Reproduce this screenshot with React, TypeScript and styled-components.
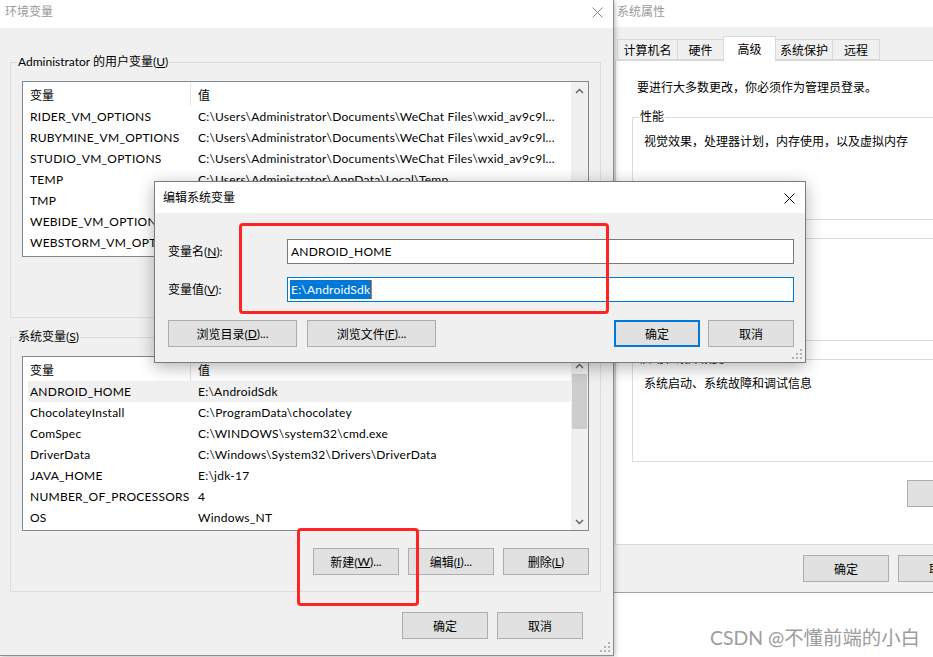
import React from "react";
import styled, { createGlobalStyle } from "styled-components";

const UI = `Lato, "Noto Sans CJK SC", sans-serif`;

const GlobalStyle = createGlobalStyle`
  html, body { margin: 0; padding: 0; background: #fff; }
  body { overflow: hidden; font-family: ${UI}; font-size: 12px; color: #000; }
  * { box-sizing: border-box; }
`;

const Screen = styled.div`
  position: relative;
  width: 933px;
  height: 657px;
  overflow: hidden;
  display: flex;
  align-items: flex-start;
  background: #fff;
  font-family: ${UI};
  font-size: 12px;
  color: #000;
`;

/* ---------- window chrome ---------- */
const EnvWindow = styled.section`
  position: relative;
  z-index: 2;
  flex: 0 0 614px;
  height: 656px;
  display: flex;
  flex-direction: column;
  background: #f0f0f0;
  border-right: 1px solid #8c8c8c;
  border-bottom: 1px solid #8c8c8c;
  box-shadow: 1px 1px 5px rgba(0, 0, 0, 0.28);
`;

const SysWindow = styled.section`
  flex: 0 0 474px;
  height: 593px;
  display: flex;
  flex-direction: column;
  background: #f0f0f0;
  border-bottom: 1px solid #a0a0a0;
`;

const TitleBar = styled.header<{ $h: number; $pl: number; $pt: number }>`
  flex: 0 0 ${(p) => p.$h}px;
  height: ${(p) => p.$h}px;
  background: #fff;
  display: flex;
  align-items: flex-start;
  justify-content: space-between;
  padding: ${(p) => p.$pt}px 10px 0 ${(p) => p.$pl}px;
`;

const TitleText = styled.span<{ $active?: boolean }>`
  line-height: 16px;
  color: ${(p) => (p.$active ? "#000" : "#9a9a9a")};
`;

const CloseBox = styled.span`
  height: 16px;
  display: flex;
  align-items: center;
`;

const CloseIcon = ({ color }: { color: string }) => (
  <svg width="11" height="11" viewBox="0 0 11 11">
    <path d="M0.5 0.5 L10.5 10.5 M10.5 0.5 L0.5 10.5" stroke={color} strokeWidth="1" fill="none" />
  </svg>
);

const GripBox = styled.span`
  position: absolute;
  right: 2px;
  bottom: 2px;
  width: 12px;
  height: 12px;
  display: block;
`;

const SizeGrip = () => (
  <GripBox>
    <svg width="12" height="12" viewBox="0 0 12 12">
      {[
        [9, 9],
        [9, 5],
        [5, 9],
        [9, 1],
        [5, 5],
        [1, 9],
      ].map(([x, y]) => (
        <rect key={`${x}-${y}`} x={x} y={y} width="2" height="2" fill="#b4b4b4" />
      ))}
    </svg>
  </GripBox>
);

/* ---------- env window content ---------- */
const EnvBody = styled.div`
  flex: 1;
  display: flex;
  flex-direction: column;
  padding: 26px 12px 0 10px;
`;

const GroupBox = styled.fieldset<{ $h?: number; $mt?: number; $pt?: number }>`
  margin: ${(p) => p.$mt ?? 0}px 0 0 0;
  min-width: 0;
  border: 1px solid #dcdcdc;
  padding: ${(p) => p.$pt ?? 11}px 11px 16px 11px;
  ${(p) => (p.$h ? `height: ${p.$h}px;` : "")}
`;

const GroupLegend = styled.legend`
  margin-left: -5px;
  padding: 0 1px;
  line-height: 16px;
`;

const ListBox = styled.div<{ $h: number }>`
  height: ${(p) => p.$h}px;
  border: 1px solid #828790;
  background: #fff;
  display: flex;
  overflow: hidden;
`;

const ListMain = styled.div`
  flex: 1;
  min-width: 0;
  overflow: hidden;
`;

const HeaderRow = styled.div`
  display: grid;
  grid-template-columns: 168px 1fr;
  height: 24px;
`;

const HeaderCell = styled.div<{ $divider?: boolean }>`
  display: flex;
  align-items: center;
  padding-left: 7px;
  border-right: ${(p) => (p.$divider ? "1px solid #e5e5e5" : "none")};
`;

const Row = styled.div<{ $selected?: boolean }>`
  display: grid;
  grid-template-columns: 163px 1fr;
  height: 21px;
  line-height: 21px;
  margin-left: 5px;
  white-space: nowrap;
  letter-spacing: 0.25px;
  background: ${(p) => (p.$selected ? "#f0f0f0" : "transparent")};
`;

const NameCell = styled.div`
  padding-left: 2px;
  overflow: hidden;
`;

const ValueCell = styled.div`
  padding-left: 7px;
  overflow: hidden;
`;

const ScrollTrack = styled.div`
  flex: 0 0 17px;
  display: flex;
  flex-direction: column;
  background: #f0f0f0;
`;

const ScrollArrow = styled.div`
  flex: 0 0 17px;
  display: flex;
  align-items: center;
  justify-content: center;
`;

const ScrollThumb = styled.div<{ $offset: number; $size: number }>`
  margin: ${(p) => p.$offset}px 1px 0;
  height: ${(p) => p.$size}px;
  background: #cdcdcd;
`;

const ScrollFill = styled.div`
  flex: 1;
`;

const Chevron = ({ down }: { down?: boolean }) => (
  <svg width="9" height="6" viewBox="0 0 9 6">
    <polyline
      points={down ? "1,1 4.5,4.5 8,1" : "1,5 4.5,1.5 8,5"}
      stroke="#606060"
      strokeWidth="1.4"
      fill="none"
    />
  </svg>
);

const ButtonRow = styled.div<{ $mt: number; $gap: number; $mr?: number }>`
  display: flex;
  justify-content: flex-end;
  gap: ${(p) => p.$gap}px;
  margin-top: ${(p) => p.$mt}px;
  margin-right: ${(p) => p.$mr ?? 0}px;
`;

const Button = styled.button<{ $w?: number; $default?: boolean }>`
  width: ${(p) => p.$w ?? 86}px;
  height: 27px;
  padding: 0;
  margin: 0;
  display: flex;
  align-items: center;
  justify-content: center;
  font: inherit;
  color: #000;
  white-space: nowrap;
  background: #e1e1e1;
  border: ${(p) => (p.$default ? "2px solid #0078d7" : "1px solid #adadad")};
  border-radius: 0;
`;

/* ---------- system properties ---------- */
const TabStrip = styled.div`
  position: relative;
  z-index: 1;
  display: flex;
  align-items: flex-end;
  height: 24px;
  margin-top: 9px;
  padding-left: 3px;
`;

const Tab = styled.div<{ $w: number; $active?: boolean }>`
  width: ${(p) => p.$w}px;
  height: ${(p) => (p.$active ? 25 : 21)}px;
  margin-bottom: ${(p) => (p.$active ? -1 : 0)}px;
  display: flex;
  align-items: center;
  justify-content: center;
  padding-bottom: ${(p) => (p.$active ? 2 : 0)}px;
  background: ${(p) => (p.$active ? "#fff" : "#f0f0f0")};
  border: 1px solid #d9d9d9;
  border-bottom: ${(p) => (p.$active ? "none" : "1px solid #d9d9d9")};
  & + & {
    margin-left: -1px;
  }
`;

const TabPanel = styled.div`
  height: 485px;
  margin: 0 8px 0 1px;
  background: #fff;
  border: 1px solid #d9d9d9;
  padding: 19px 16px 0 16px;
  display: flex;
  flex-direction: column;
`;

const Note = styled.div<{ $indent?: number }>`
  line-height: 16px;
  margin-left: ${(p) => p.$indent ?? 0}px;
  white-space: nowrap;
`;

const Footer = styled.div`
  display: flex;
  justify-content: flex-end;
  gap: 9px;
  padding: 10px 9px 10px 0;
`;

/* ---------- dialog ---------- */
const Dialog = styled.div`
  position: absolute;
  z-index: 5;
  left: 154px;
  top: 181px;
  width: 652px;
  height: 182px;
  display: flex;
  flex-direction: column;
  background: #f0f0f0;
  border: 1px solid #7a7a7a;
  box-shadow: 0 4px 16px rgba(0, 0, 0, 0.3);
`;

const DialogBody = styled.div`
  flex: 1;
  padding: 26px 11px 0 13px;
  display: flex;
  flex-direction: column;
`;

const FieldGrid = styled.div`
  display: grid;
  grid-template-columns: 119px 1fr;
  row-gap: 13px;
  align-items: center;
`;

const FieldLabel = styled.div`
  line-height: 16px;
`;

const Field = styled.div<{ $focused?: boolean }>`
  height: 25px;
  display: flex;
  align-items: center;
  padding-left: ${(p) => (p.$focused ? 2 : 3)}px;
  background: #fff;
  border: 1px solid ${(p) => (p.$focused ? "#0078d7" : "#7a7a7a")};
  white-space: nowrap;
  letter-spacing: 0.2px;
`;

const Selection = styled.span`
  background: #0078d7;
  color: #fff;
  line-height: 19px;
  padding: 0 1px;
  border-right: 1px solid #e07020;
`;

const DialogButtons = styled.div`
  display: flex;
  justify-content: space-between;
  margin-top: 18px;
`;

const ButtonGroup = styled.div<{ $gap: number }>`
  display: flex;
  gap: ${(p) => p.$gap}px;
`;

/* ---------- overlays ---------- */
const Callout = styled.div<{ $x: number; $y: number; $w: number; $h: number }>`
  position: absolute;
  z-index: 6;
  left: ${(p) => p.$x}px;
  top: ${(p) => p.$y}px;
  width: ${(p) => p.$w}px;
  height: ${(p) => p.$h}px;
  border: 3px solid #ff2424;
  border-radius: 4px;
  pointer-events: none;
`;

const Watermark = styled.div`
  position: absolute;
  z-index: 7;
  left: 710px;
  top: 625px;
  font-size: 19.4px;
  line-height: 26px;
  color: #9c9c9c;
  white-space: nowrap;
  text-shadow: 0 0 2px #fff;
`;

/* ---------- data ---------- */
const WX = "C:\\Users\\Administrator\\Documents\\WeChat Files\\wxid_av9c9l...";
const TMPDIR = "C:\\Users\\Administrator\\AppData\\Local\\Temp";

const userVars: [string, string][] = [
  ["RIDER_VM_OPTIONS", WX],
  ["RUBYMINE_VM_OPTIONS", WX],
  ["STUDIO_VM_OPTIONS", WX],
  ["TEMP", TMPDIR],
  ["TMP", TMPDIR],
  ["WEBIDE_VM_OPTIONS", WX],
  ["WEBSTORM_VM_OPTIONS", WX],
];

const sysVars: [string, string][] = [
  ["ANDROID_HOME", "E:\\AndroidSdk"],
  ["ChocolateyInstall", "C:\\ProgramData\\chocolatey"],
  ["ComSpec", "C:\\WINDOWS\\system32\\cmd.exe"],
  ["DriverData", "C:\\Windows\\System32\\Drivers\\DriverData"],
  ["JAVA_HOME", "E:\\jdk-17"],
  ["NUMBER_OF_PROCESSORS", "4"],
  ["OS", "Windows_NT"],
];

const VarList = ({
  rows,
  height,
  thumbOffset,
  thumbSize,
  selected,
}: {
  rows: [string, string][];
  height: number;
  thumbOffset: number;
  thumbSize: number;
  selected?: number;
}) => (
  <ListBox $h={height}>
    <ListMain>
      <HeaderRow>
        <HeaderCell $divider>变量</HeaderCell>
        <HeaderCell>值</HeaderCell>
      </HeaderRow>
      {rows.map(([k, v], i) => (
        <Row key={k} $selected={i === selected}>
          <NameCell>{k}</NameCell>
          <ValueCell>{v}</ValueCell>
        </Row>
      ))}
    </ListMain>
    <ScrollTrack>
      <ScrollArrow>
        <Chevron />
      </ScrollArrow>
      <ScrollThumb $offset={thumbOffset} $size={thumbSize} />
      <ScrollFill />
      <ScrollArrow>
        <Chevron down />
      </ScrollArrow>
    </ScrollTrack>
  </ListBox>
);

export default function App() {
  return (
    <>
      <GlobalStyle />
      <Screen>
        <EnvWindow>
          <TitleBar $h={28} $pl={5} $pt={4}>
            <TitleText>环境变量</TitleText>
            <CloseBox>
              <CloseIcon color="#8a8a8a" />
            </CloseBox>
          </TitleBar>
          <EnvBody>
            <GroupBox>
              <GroupLegend>
                Administrator 的用户变量(<u>U</u>)
              </GroupLegend>
              <VarList rows={userVars} height={176} thumbOffset={85} thumbSize={46} />
              <ButtonRow $mt={17} $gap={9}>
                <Button>
                  新建(<u>N</u>)...
                </Button>
                <Button>
                  编辑(<u>E</u>)...
                </Button>
                <Button>
                  删除(<u>D</u>)
                </Button>
              </ButtonRow>
            </GroupBox>
            <GroupBox $mt={11}>
              <GroupLegend>
                系统变量(<u>S</u>)
              </GroupLegend>
              <VarList rows={sysVars} height={175} thumbOffset={0} thumbSize={55} selected={0} />
              <ButtonRow $mt={17} $gap={9}>
                <Button>
                  新建(<u>W</u>)...
                </Button>
                <Button>
                  编辑(<u>I</u>)...
                </Button>
                <Button>
                  删除(<u>L</u>)
                </Button>
              </ButtonRow>
            </GroupBox>
            <ButtonRow $mt={20} $gap={9} $mr={18}>
              <Button>确定</Button>
              <Button>取消</Button>
            </ButtonRow>
          </EnvBody>
          <SizeGrip />
        </EnvWindow>

        <SysWindow>
          <TitleBar $h={27} $pl={3} $pt={4}>
            <TitleText>系统属性</TitleText>
          </TitleBar>
          <TabStrip>
            <Tab $w={61}>计算机名</Tab>
            <Tab $w={47}>硬件</Tab>
            <Tab $w={53} $active>
              高级
            </Tab>
            <Tab $w={58}>系统保护</Tab>
            <Tab $w={48}>远程</Tab>
          </TabStrip>
          <TabPanel>
            <Note $indent={5}>要进行大多数更改，你必须作为管理员登录。</Note>
            <GroupBox $mt={13} $h={111} $pt={9}>
              <GroupLegend>性能</GroupLegend>
              <Note>视觉效果，处理器计划，内存使用，以及虚拟内存</Note>
            </GroupBox>
            <GroupBox $mt={10} $h={111} $pt={9}>
              <GroupLegend>用户配置文件</GroupLegend>
              <Note>与登录帐户相关的桌面设置</Note>
            </GroupBox>
            <GroupBox $mt={10} $h={111} $pt={9}>
              <GroupLegend>启动和故障恢复</GroupLegend>
              <Note>系统启动、系统故障和调试信息</Note>
            </GroupBox>
            <ButtonRow $mt={18} $gap={0}>
              <Button $w={156}>
                环境变量(<u>N</u>)...
              </Button>
            </ButtonRow>
          </TabPanel>
          <Footer>
            <Button>确定</Button>
            <Button>取消</Button>
            <Button>
              应用(<u>A</u>)
            </Button>
          </Footer>
        </SysWindow>

        <Dialog>
          <TitleBar $h={31} $pl={8} $pt={8}>
            <TitleText $active>编辑系统变量</TitleText>
            <CloseBox>
              <CloseIcon color="#000" />
            </CloseBox>
          </TitleBar>
          <DialogBody>
            <FieldGrid>
              <FieldLabel>
                变量名(<u>N</u>):
              </FieldLabel>
              <Field>ANDROID_HOME</Field>
              <FieldLabel>
                变量值(<u>V</u>):
              </FieldLabel>
              <Field $focused>
                <Selection>E:\AndroidSdk</Selection>
              </Field>
            </FieldGrid>
            <DialogButtons>
              <ButtonGroup $gap={10}>
                <Button $w={129}>
                  浏览目录(<u>D</u>)...
                </Button>
                <Button $w={129}>
                  浏览文件(<u>F</u>)...
                </Button>
              </ButtonGroup>
              <ButtonGroup $gap={8}>
                <Button $default>确定</Button>
                <Button>取消</Button>
              </ButtonGroup>
            </DialogButtons>
          </DialogBody>
          <SizeGrip />
        </Dialog>

        <Callout $x={239} $y={223} $w={370} $h={91} />
        <Callout $x={297} $y={528} $w={122} $h={78} />
        <Watermark>CSDN @不懂前端的小白</Watermark>
      </Screen>
    </>
  );
}
